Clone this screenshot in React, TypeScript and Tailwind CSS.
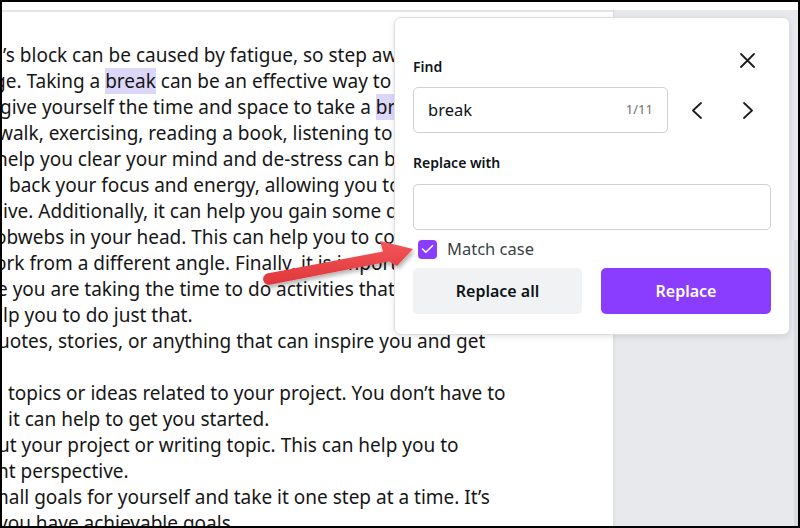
import React from 'react';

const Hl: React.FC<{ children: React.ReactNode }> = ({ children }) => (
  <span className="bg-[#dcd6f9]">{children}</span>
);

const lines: { text: React.ReactNode; cls: string }[] = [
  { text: '’s block can be caused by fatigue, so step away from your work and recharge.', cls: 'ml-[1px]' },
  { text: <>ge. Taking a <Hl>break</Hl> can be an effective way to clear your head and</>, cls: '-ml-[8px]' },
  { text: <>give yourself the time and space to take a <Hl>break</Hl> from your work.</>, cls: '-ml-[2px]' },
  { text: 'walk, exercising, reading a book, listening to music, or anything', cls: '-ml-[4px]' },
  { text: 'help you clear your mind and de-stress can be beneficial. It can', cls: '-ml-[6px]' },
  { text: 'back your focus and energy, allowing you to be more', cls: 'ml-[7px]' },
  { text: 'ive. Additionally, it can help you gain some distance from', cls: 'ml-[1px]' },
  { text: 'obwebs in your head. This can help you to come back to', cls: '-ml-[7px]' },
  { text: 'ork from a different angle. Finally, it is important to make', cls: '-ml-[7px]' },
  { text: 'e you are taking the time to do activities that help you relax.', cls: '-ml-[5px]' },
  { text: 'lp you to do just that.', cls: 'ml-[1px]' },
  { text: 'uotes, stories, or anything that can inspire you and get', cls: '-ml-[4px]' },
  { text: '\u00a0', cls: '' },
  { text: 'topics or ideas related to your project. You don’t have to', cls: 'ml-[6px]' },
  { text: 'it can help to get you started.', cls: 'ml-[6px]' },
  { text: 'ut your project or writing topic. This can help you to', cls: '-ml-[4px]' },
  { text: 'nt perspective.', cls: '-ml-[5px]' },
  { text: 'mall goals for yourself and take it one step at a time. It’s', cls: '-ml-[11px]' },
  { text: 'you have achievable goals.', cls: '-ml-[4px]' },
];

const FindPanel: React.FC = () => (
  <div className="absolute left-[392px] top-[15px] w-[396px] rounded-[7px] border border-[#dcdee2] bg-white px-[18px] pt-[39px] pb-[20px] shadow-[0_2px_6px_rgba(0,0,0,0.1)]">
    <button className="absolute right-[34px] top-[35px] w-[15px] h-[15px]">
      <svg width="15" height="15" viewBox="0 0 15 15" fill="none" stroke="#1b1d20" strokeWidth="1.8" strokeLinecap="round">
        <path d="M1 1 14 14M14 1 1 14" />
      </svg>
    </button>
    <div className="h-[20px] text-[14px] leading-[20px] font-semibold text-[#0e1318]">Find</div>
    <div className="mt-[10px] flex items-center">
      <div className="w-[255px] h-[46px] flex items-center justify-between rounded-[5px] border border-[#cdd0d4] pl-[14px] pr-[14px]">
        <span className="text-[16.5px] text-[#0e1318]">break</span>
        <span className="text-[13px] text-[#6c7075]">1/11</span>
      </div>
      <div className="ml-[9px] flex gap-[11px]">
        <button className="w-[40px] h-[40px] flex items-center justify-center">
          <svg width="12" height="17" viewBox="0 0 12 17" fill="none" stroke="#1b1d20" strokeWidth="1.8" strokeLinecap="round" strokeLinejoin="round">
            <path d="M10 1 2 8.5 10 16" />
          </svg>
        </button>
        <button className="w-[40px] h-[40px] flex items-center justify-center">
          <svg width="12" height="17" viewBox="0 0 12 17" fill="none" stroke="#1b1d20" strokeWidth="1.8" strokeLinecap="round" strokeLinejoin="round">
            <path d="M2 1 10 8.5 2 16" />
          </svg>
        </button>
      </div>
    </div>
    <div className="mt-[20px] h-[20px] text-[14px] leading-[20px] font-semibold text-[#0e1318]">Replace with</div>
    <div className="mt-[11px] h-[46px] rounded-[5px] border border-[#cdd0d4]" />
    <div className="mt-[9px] h-[20px] flex items-center">
      <div className="ml-[5px] w-[19px] h-[19px] rounded-[4px] bg-[#8b3dff] flex items-center justify-center">
        <svg width="13" height="10" viewBox="0 0 13 10" fill="none" stroke="white" strokeWidth="1.6" strokeLinecap="round" strokeLinejoin="round">
          <path d="M1.5 5 4.8 8.3 11.5 1.7" />
        </svg>
      </div>
      <span className="ml-[10px] text-[16.5px] leading-[20px] text-[#3b3f44]">Match case</span>
    </div>
    <div className="mt-[9px] flex gap-[19px]">
      <button className="w-[169px] h-[46px] rounded-[5px] bg-[#f1f2f4] text-[16px] font-semibold text-[#0e1318]">
        Replace all
      </button>
      <button className="flex-1 h-[46px] rounded-[5px] bg-[#8b3dff] text-[16px] font-semibold text-white">
        Replace
      </button>
    </div>
  </div>
);

const Arrow: React.FC = () => (
  <svg className="absolute -left-[2px] -top-[2px] pointer-events-none" width="800" height="528" viewBox="0 0 800 528">
    <defs>
      <filter id="ashadow" x="-20%" y="-50%" width="140%" height="200%">
        <feDropShadow dx="1.5" dy="3" stdDeviation="2" floodColor="#000" floodOpacity="0.3" />
      </filter>
      <linearGradient id="agrad" x1="0" y1="0" x2="0" y2="1">
        <stop offset="0" stopColor="#f2575a" />
        <stop offset="1" stopColor="#e0363a" />
      </linearGradient>
    </defs>
    <path
      d="M267 273.5 L383 251.5 L380 241 L413 249 L397 266 L389 261.5 L271 284.5 A5.5 5.5 0 0 1 267 273.5 Z"
      fill="url(#agrad)"
      filter="url(#ashadow)"
    />
  </svg>
);

const App: React.FC = () => {
  return (
    <div className="relative w-[800px] h-[528px] overflow-hidden border-2 border-black bg-white flex flex-col font-['Noto_Sans',sans-serif]">
      <div className="h-[8px] shrink-0 bg-white" />
      <div className="flex flex-1 min-h-0">
        <div className="w-[611px] overflow-hidden border-t-2 border-[#e3e4e7] pt-[30px] text-[19px] leading-[26px] text-[#161616]">
          {lines.map((l, i) => (
            <div key={i} className={`whitespace-nowrap ${l.cls}`}>
              {l.text}
            </div>
          ))}
        </div>
        <div className="relative flex-1 bg-[#e8e9ed] shadow-[inset_3px_0_3px_-2px_rgba(0,0,0,0.08)]">
          <div className="absolute right-0 top-[230px] bottom-0 w-[4px] bg-[#dadbe0]" />
        </div>
      </div>
      <FindPanel />
      <Arrow />
    </div>
  );
};

export default App;
